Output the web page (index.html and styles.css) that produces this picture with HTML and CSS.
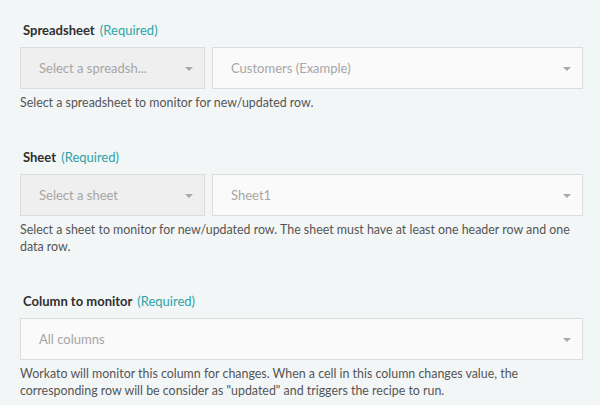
FILE: index.html
```html
<!DOCTYPE html>
<html>
<head>
<meta charset="utf-8">
<link rel="stylesheet" href="styles.css">
</head>
<body>
<div class="form">
  <div class="field">
    <div class="label">Spreadsheet <span class="req">(Required)</span></div>
    <div class="row">
      <div class="select select-mode disabled"><span class="val">Select a spreadsh...</span><span class="caret"></span></div>
      <div class="select select-main"><span class="val">Customers (Example)</span><span class="caret"></span></div>
    </div>
    <div class="help">Select a spreadsheet to monitor for new/updated row.</div>
  </div>
  <div class="field">
    <div class="label">Sheet <span class="req">(Required)</span></div>
    <div class="row">
      <div class="select select-mode disabled"><span class="val">Select a sheet</span><span class="caret"></span></div>
      <div class="select select-main"><span class="val">Sheet1</span><span class="caret"></span></div>
    </div>
    <div class="help">Select a sheet to monitor for new/updated row. The sheet must have at least one header row and one data row.</div>
  </div>
  <div class="field">
    <div class="label">Column to monitor <span class="req">(Required)</span></div>
    <div class="row">
      <div class="select select-main"><span class="val">All columns</span><span class="caret"></span></div>
    </div>
    <div class="help">Workato will monitor this column for changes. When a cell in this column changes value, the corresponding row will be consider as "updated" and triggers the recipe to run.</div>
  </div>
</div>
</body>
</html>
```

FILE: styles.css
```css
html, body {
  margin: 0;
  padding: 0;
  background: #f3f6f7;
  font-family: Lato, "Open Sans", sans-serif;
}
.form {
  padding: 22px 17px 0 20px;
}
.field {
  margin-bottom: 38px;
}
.field:last-child {
  margin-bottom: 0;
}
.label {
  font-size: 13px;
  font-weight: 700;
  color: #2f2f2f;
  line-height: 16px;
  padding-left: 3px;
  margin-bottom: 9px;
}
.req {
  font-weight: 400;
  color: #2ea3a6;
  margin-left: 2px;
}
.row {
  display: flex;
  gap: 7px;
}
.select {
  box-sizing: border-box;
  height: 42px;
  border: 1px solid #dcdcdc;
  background: #fafafa;
  display: flex;
  align-items: center;
  justify-content: space-between;
  padding: 0 11px 0 18px;
  font-size: 13px;
  color: #a6a6a6;
}
.select-mode {
  width: 185px;
  flex: none;
}
.select-main {
  flex: 1;
}
.disabled {
  background: #efefef;
}
.caret {
  width: 0;
  height: 0;
  border-left: 4px solid transparent;
  border-right: 4px solid transparent;
  border-top: 4px solid #a8a8a8;
  margin-top: 2px;
}
.help {
  margin-top: 5px;
  font-size: 12.4px;
  line-height: 17px;
  color: #555;
}
```
